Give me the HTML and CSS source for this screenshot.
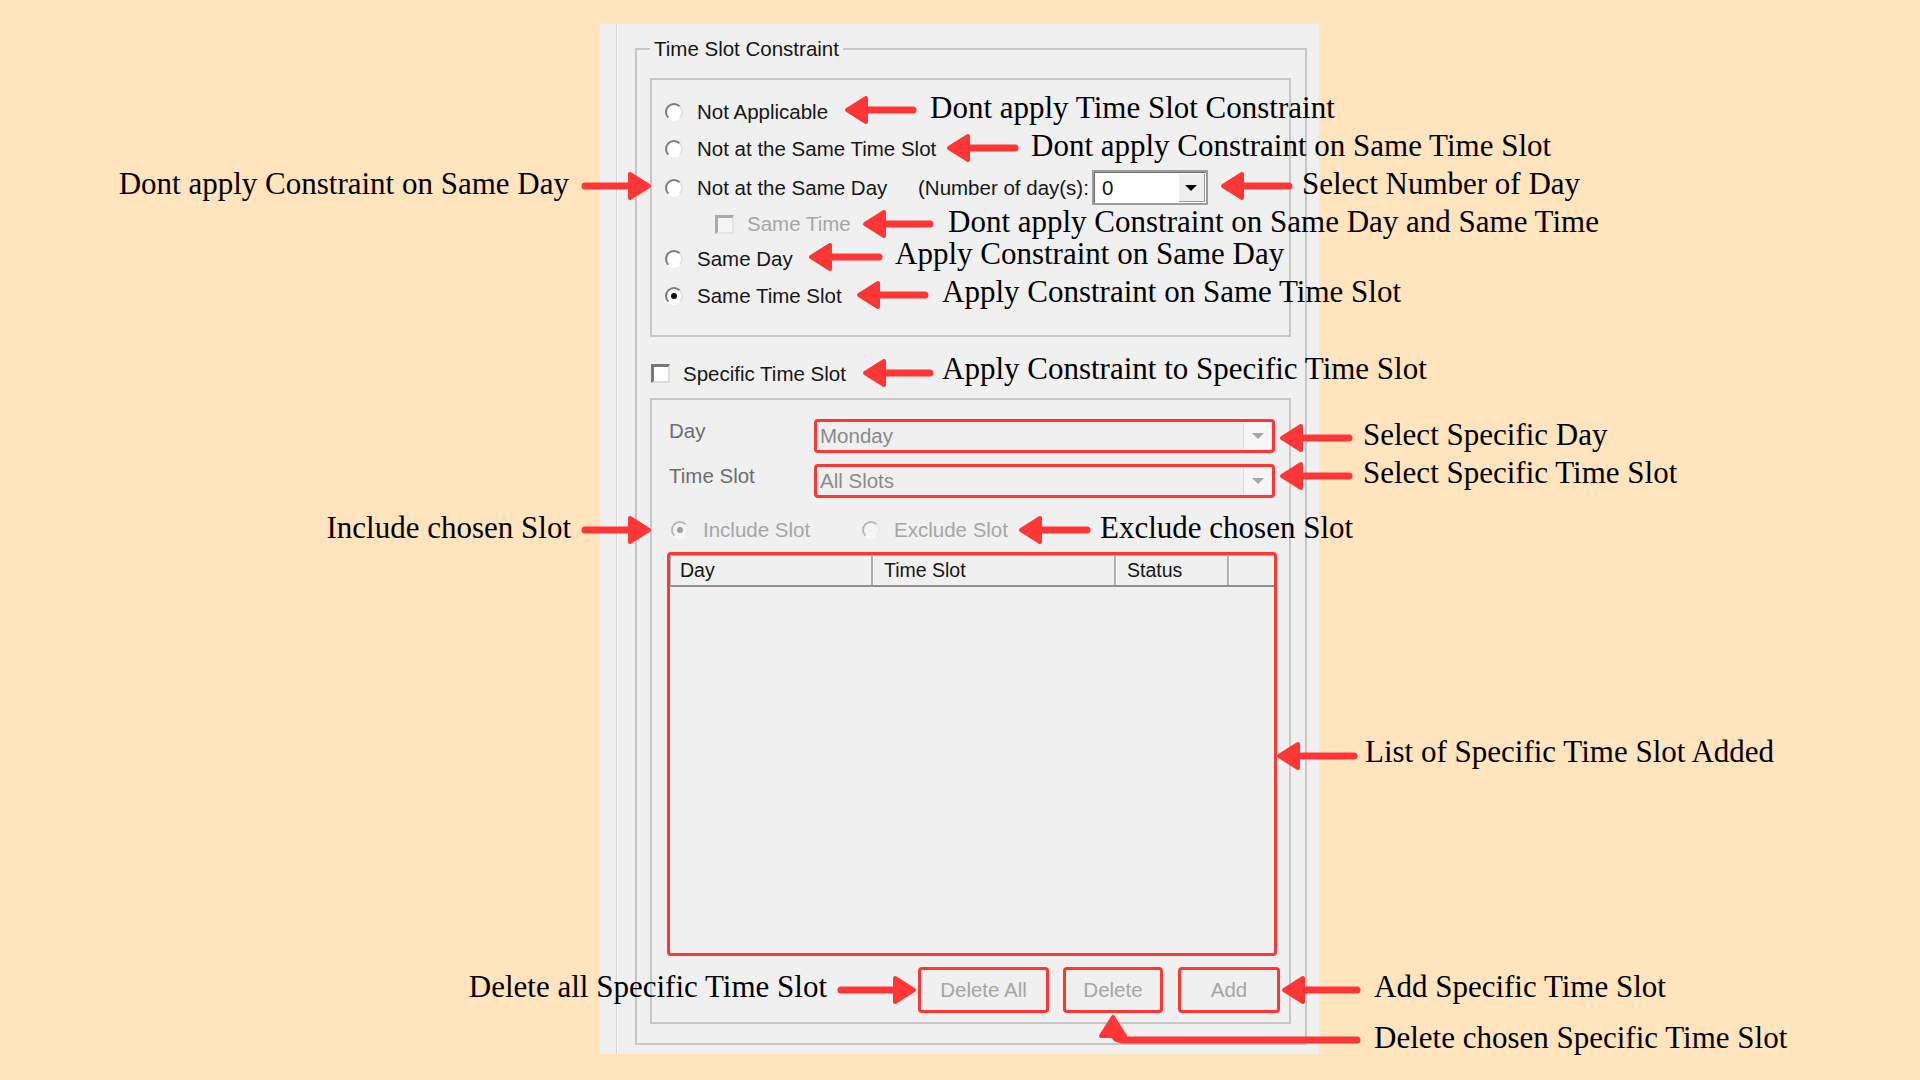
FILE: index.html
```html
<!DOCTYPE html>
<html>
<head>
<meta charset="UTF-8">
<title>Time Slot Constraint</title>
<link rel="stylesheet" href="styles.css">
</head>
<body>
<div class="stage">

	<!-- the dialog panel -->
	<div class="form">
		<fieldset class="group">
			<legend>Time Slot Constraint</legend>

			<div class="box choices">
				<div class="row"><span class="radio"></span><span>Not Applicable</span></div>
				<div class="row"><span class="radio"></span><span>Not at the Same Time Slot</span></div>
				<div class="row tall">
					<span class="radio"></span><span class="day-label">Not at the Same Day</span>
					<span>(Number of day(s):</span>
					<span class="days"><span class="days-value">0</span><span class="days-btn"><i class="tri"></i></span></span>
				</div>
				<div class="row sub"><span class="check off"></span><span class="dim">Same Time</span></div>
				<div class="row"><span class="radio"></span><span>Same Day</span></div>
				<div class="row"><span class="radio on"></span><span>Same Time Slot</span></div>
			</div>

			<div class="check-row"><span class="check"></span><span>Specific Time Slot</span></div>

			<div class="box specific">
				<div class="field">
					<span class="field-label">Day</span>
					<div class="combo mark"><span class="combo-text">Monday</span><span class="combo-btn"><i class="tri"></i></span></div>
				</div>
				<div class="field">
					<span class="field-label">Time Slot</span>
					<div class="combo mark"><span class="combo-text">All Slots</span><span class="combo-btn"><i class="tri"></i></span></div>
				</div>

				<div class="slot-row">
					<span class="opt include"><span class="radio off on"></span><span class="dim">Include Slot</span></span>
					<span class="opt"><span class="radio off"></span><span class="dim">Exclude Slot</span></span>
				</div>

				<div class="list mark">
					<div class="list-head">
						<span class="col col-day">Day</span>
						<span class="col col-slot">Time Slot</span>
						<span class="col col-status">Status</span>
						<span class="col col-rest"></span>
					</div>
				</div>

				<div class="buttons">
					<button class="btn mark btn-all" disabled>Delete All</button>
					<button class="btn mark btn-del" disabled>Delete</button>
					<button class="btn mark btn-add" disabled>Add</button>
				</div>
			</div>
		</fieldset>
	</div>

	<!-- callout texts -->
	<span class="note n-na">Dont apply Time Slot Constraint</span>
	<span class="note n-nts">Dont apply Constraint on Same Time Slot</span>
	<span class="note n-num">Select Number of Day</span>
	<span class="note n-st">Dont apply Constraint on Same Day and Same Time</span>
	<span class="note n-sd">Apply Constraint on Same Day</span>
	<span class="note n-sts">Apply Constraint on Same Time Slot</span>
	<span class="note n-spec">Apply Constraint to Specific Time Slot</span>
	<span class="note n-day">Select Specific Day</span>
	<span class="note n-slot">Select Specific Time Slot</span>
	<span class="note n-excl">Exclude chosen Slot</span>
	<span class="note n-list">List of Specific Time Slot Added</span>
	<span class="note n-add">Add Specific Time Slot</span>
	<span class="note n-del">Delete chosen Specific Time Slot</span>
	<span class="note left n-nsd">Dont apply Constraint on Same Day</span>
	<span class="note left n-incl">Include chosen Slot</span>
	<span class="note left n-all">Delete all Specific Time Slot</span>

	<!-- callout arrows -->
	<svg class="arrows" width="1920" height="1080" viewBox="0 0 1920 1080">
		<defs>
			<polygon id="head" points="0,0 19,-12 19,12"/>
		</defs>
		<g class="shafts">
			<path d="M913 110H857"/>
			<path d="M1015 148H959"/>
			<path d="M1289 186H1233"/>
			<path d="M930 224H875"/>
			<path d="M879 257H821"/>
			<path d="M925 295H869"/>
			<path d="M930 373H875"/>
			<path d="M1349 438H1292"/>
			<path d="M1349 476H1292"/>
			<path d="M1087 530H1031"/>
			<path d="M1354 756H1289"/>
			<path d="M1357 990H1294"/>
			<path d="M1357 1040H1124Q1113 1040 1113 1029V1027"/>
			<path d="M585 186H639"/>
			<path d="M585 530H639"/>
			<path d="M841 990H904"/>
		</g>
		<g class="heads">
			<use href="#head" transform="translate(847 110)"/>
			<use href="#head" transform="translate(949 148)"/>
			<use href="#head" transform="translate(1223 186)"/>
			<use href="#head" transform="translate(865 224)"/>
			<use href="#head" transform="translate(811 257)"/>
			<use href="#head" transform="translate(859 295)"/>
			<use href="#head" transform="translate(865 373)"/>
			<use href="#head" transform="translate(1282 438)"/>
			<use href="#head" transform="translate(1282 476)"/>
			<use href="#head" transform="translate(1021 530)"/>
			<use href="#head" transform="translate(1279 756)"/>
			<use href="#head" transform="translate(1284 990)"/>
			<use href="#head" transform="translate(1113 1017) rotate(90)"/>
			<use href="#head" transform="translate(649 186) scale(-1 1)"/>
			<use href="#head" transform="translate(649 530) scale(-1 1)"/>
			<use href="#head" transform="translate(914 990) scale(-1 1)"/>
		</g>
	</svg>

</div>
</body>
</html>
```

FILE: styles.css
```css
body{
	margin:0;
	background:#ffe4bd;
}

.stage{
	position:relative;
	width:1920px;
	height:1080px;
	box-sizing:border-box;
	padding:24px 0 0 600px;
	overflow:hidden;
	font-family:"Liberation Sans", Arial, sans-serif;
	font-size:20.5px;
	color:#161616;
}

/* dialog */

.form{
	width:719px;
	height:1030px;
	box-sizing:border-box;
	padding:12px 12px 9px 35px;
	background:linear-gradient(to right, transparent 16px, #d6d6d6 16px, #d6d6d6 17px, #fafafa 17px, #fafafa 18px, transparent 18px), #f0f0f0;
}

.group{
	margin:0;
	padding:16px 14px 19px 13px;
	border:2px solid #c6c6c6;
	min-width:0;
}

.group legend{
	padding:0 4px;
	line-height:26px;
	color:#141414;
}

.box{
	box-sizing:border-box;
	border:2px solid #c6c6c6;
}

.choices{
	height:259px;
	padding:13px 0 0 13px;
}

.row{
	display:flex;
	align-items:center;
	height:37px;
	line-height:24px;
	white-space:nowrap;
}

.row.tall{
	height:41px;
}

.row.sub{
	height:32px;
	padding-left:50px;
}

.day-label{
	width:221px;
}

.dim{
	color:#a6a6a6;
}

/* classic radio and check */

.radio{
	position:relative;
	flex:none;
	width:18px;
	height:18px;
	box-sizing:border-box;
	margin-right:14px;
	border-radius:50%;
	border:2px solid;
	border-color:#7b7b7b #e4e4e4 #ffffff #7b7b7b;
	background:#fff;
}

.radio.off{
	border-color:#b8b8b8 #ececec #fafafa #b8b8b8;
	background:#f5f5f5;
}

.radio.on::after{
	content:"";
	position:absolute;
	left:4px;
	top:4px;
	width:6px;
	height:6px;
	border-radius:50%;
	background:#111;
}

.radio.off.on::after{
	background:#a0a0a0;
}

.check{
	flex:none;
	width:19px;
	height:19px;
	box-sizing:border-box;
	margin-right:13px;
	border-style:solid;
	border-width:3px 2px 2px 3px;
	border-color:#777 #dcdcdc #dcdcdc #777;
	background:#fff;
}

.check.off{
	border-color:#aaa #e4e4e4 #e4e4e4 #aaa;
	background:#f5f5f5;
}

/* number of days dropdown */

.days{
	display:flex;
	width:116px;
	height:35px;
	box-sizing:border-box;
	margin-left:3px;
	border:2px solid #9c9c9c;
	box-shadow:inset 1px 1px 0 #6e6e6e;
	background:#fff;
}

.days-value{
	flex:1;
	padding-left:8px;
	line-height:31px;
}

.days-btn{
	display:flex;
	align-items:center;
	justify-content:center;
	width:27px;
	margin:1px 1px 1px 0;
	background:#efefef;
	box-shadow:inset 1px 1px 0 #fff, inset -1px -1px 0 #9a9a9a;
}

.tri{
	display:inline-block;
	width:0;
	height:0;
	border-left:6px solid transparent;
	border-right:6px solid transparent;
	border-top:6px solid #000;
}

/* specific time slot */

.check-row{
	display:flex;
	align-items:center;
	height:61px;
	box-sizing:border-box;
	padding:12px 0 0 1px;
	line-height:24px;
}

.specific{
	height:626px;
	padding-top:19px;
}

.field{
	display:flex;
	align-items:flex-start;
	height:34px;
	margin-left:17px;
}

.field + .field{
	margin-top:11px;
}

.field-label{
	width:145px;
	line-height:24px;
	color:#6d6d6d;
}

.mark{
	border:3px solid #ff3636;
	border-radius:4px;
}

.combo{
	display:flex;
	width:461px;
	height:34px;
	box-sizing:border-box;
	background:#f0f0f0;
}

.combo-text{
	flex:1;
	padding-left:3px;
	line-height:28px;
	color:#8a8a8a;
}

.combo-btn{
	display:flex;
	align-items:center;
	justify-content:center;
	width:27px;
	margin:1px 1px 1px 0;
	background:#f6f6f6;
	border-left:1px solid #dcdcdc;
}

.combo-btn .tri{
	border-top-color:#a6a6a6;
}

.slot-row{
	display:flex;
	align-items:center;
	height:36px;
	margin:14px 0 0 19px;
	line-height:24px;
}

.opt{
	display:flex;
	align-items:center;
}

.opt.include{
	width:191px;
}

/* list of added slots */

.list{
	width:610px;
	height:404px;
	box-sizing:border-box;
	margin:4px 0 0 15px;
	background:#f0f0f0;
}

.list-head{
	display:flex;
	height:32px;
	box-sizing:border-box;
	border-top:1px solid #b4b4b4;
	border-left:1px solid #b4b4b4;
	border-bottom:2px solid #8e8e8e;
}

.col{
	box-sizing:border-box;
	padding-left:11px;
	border-right:2px solid #b0b0b0;
	box-shadow:inset 1px 0 0 #fff;
	font-size:19.5px;
	line-height:29px;
	color:#151515;
}

.col-day{
	width:202px;
	padding-left:9px;
}

.col-slot{
	width:243px;
}

.col-status{
	width:113px;
}

.col-rest{
	flex:1;
	border-right:none;
}

/* buttons */

.buttons{
	display:flex;
	justify-content:flex-end;
	margin-top:11px;
	padding-right:9px;
}

.btn{
	height:46px;
	padding:0;
	font:inherit;
	color:#a5a5a5;
	background:#f0f0f0;
}

.btn-all{
	width:131px;
}

.btn-del{
	width:100px;
	margin-left:14px;
}

.btn-add{
	width:102px;
	margin-left:15px;
}

/* callouts */

.note{
	position:absolute;
	font-family:"Liberation Serif", "Times New Roman", serif;
	font-size:31px;
	line-height:36px;
	color:#000;
	white-space:nowrap;
}

.n-na{ left:930px; top:90px; }
.n-nts{ left:1031px; top:128px; }
.n-num{ left:1302px; top:166px; }
.n-st{ left:948px; top:204px; }
.n-sd{ left:895px; top:236px; }
.n-sts{ left:942px; top:274px; }
.n-spec{ left:942px; top:351px; }
.n-day{ left:1363px; top:417px; }
.n-slot{ left:1363px; top:455px; }
.n-excl{ left:1100px; top:510px; }
.n-list{ left:1365px; top:734px; }
.n-add{ left:1374px; top:969px; }
.n-del{ left:1374px; top:1020px; }

.n-nsd{ right:1351px; top:166px; }
.n-incl{ right:1349px; top:510px; }
.n-all{ right:1093px; top:969px; }

.arrows{
	position:absolute;
	left:0;
	top:0;
	pointer-events:none;
}

.shafts{
	fill:none;
	stroke:#ff3636;
	stroke-width:7;
	stroke-linecap:round;
}

.heads{
	fill:#ff3636;
	stroke:#ff3636;
	stroke-width:4;
	stroke-linejoin:round;
}
```
